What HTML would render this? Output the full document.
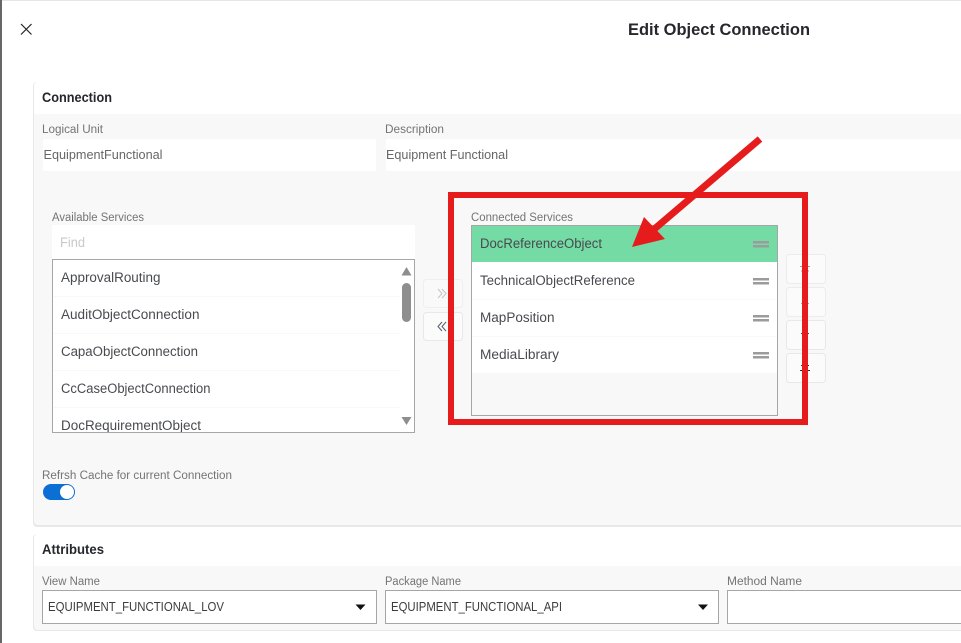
<!DOCTYPE html>
<html lang="en">
<head>
<meta charset="utf-8">
<title>Edit Object Connection</title>
<style>
html,body{margin:0;padding:0;width:961px;height:643px;overflow:hidden;background:#fff}
svg{display:block}
text{font-family:"Liberation Sans",Arial,sans-serif;white-space:pre}
.h{font-size:13.5px;font-weight:700;fill:#25272c}
.l{font-size:11.5px;fill:#747474}
.v{font-size:13px;fill:#666}
.i{font-size:13.5px;fill:#484a4f}
.s{font-size:12.5px;fill:#3c3c3c}
</style>
</head>
<body>
<svg width="961" height="643" viewBox="0 0 961 643" xmlns="http://www.w3.org/2000/svg">
<rect width="961" height="643" fill="#fff"/>
<rect x="0" y="0" width="961" height="1" fill="#e6e6e6"/>
<rect x="0" y="0" width="2" height="643" fill="#666"/>

<!-- close -->
<path d="M21 24 L31.5 34.5 M31.5 24 L21 34.5" stroke="#222" stroke-width="1.2" fill="none"/>
<text x="628" y="35" font-size="16.5" font-weight="700" fill="#25272c" textLength="182" lengthAdjust="spacingAndGlyphs">Edit Object Connection</text>

<!-- Connection card -->
<rect x="33" y="82" width="940" height="445" rx="4" fill="#e8e8e8"/>
<rect x="34" y="82" width="940" height="443" rx="4" fill="#f8f8f8"/>
<path d="M34 114 V86 a4 4 0 0 1 4-4 H961 V114 Z" fill="#fff"/>
<text class="h" x="42" y="102" textLength="70" lengthAdjust="spacingAndGlyphs">Connection</text>

<text class="l" x="42" y="133" textLength="61" lengthAdjust="spacingAndGlyphs">Logical Unit</text>
<rect x="43" y="139" width="333" height="32" rx="2" fill="#fff"/>
<text class="v" x="43.5" y="159" textLength="119" lengthAdjust="spacingAndGlyphs">EquipmentFunctional</text>
<text class="l" x="385" y="133" textLength="59" lengthAdjust="spacingAndGlyphs">Description</text>
<rect x="386" y="139" width="575" height="32" rx="2" fill="#fff"/>
<text class="v" x="386" y="159" textLength="122" lengthAdjust="spacingAndGlyphs">Equipment Functional</text>

<!-- Available services -->
<text class="l" x="52" y="221" textLength="92" lengthAdjust="spacingAndGlyphs">Available Services</text>
<rect x="52" y="225" width="363" height="34" fill="#fff"/>
<text x="60" y="247" font-size="13.5" fill="#c9c9c9" textLength="25" lengthAdjust="spacingAndGlyphs">Find</text>
<rect x="52.5" y="259.5" width="362" height="173" fill="#fff"/>
<path d="M54 296.5H400M54 333.5H400M54 370.5H400M54 407.5H400" stroke="#f8f8f8" stroke-width="1"/>
<text class="i" x="61" y="282" textLength="99.5" lengthAdjust="spacingAndGlyphs">ApprovalRouting</text>
<text class="i" x="61" y="319" textLength="138.5" lengthAdjust="spacingAndGlyphs">AuditObjectConnection</text>
<text class="i" x="61" y="356" textLength="137" lengthAdjust="spacingAndGlyphs">CapaObjectConnection</text>
<text class="i" x="61" y="393" textLength="149.5" lengthAdjust="spacingAndGlyphs">CcCaseObjectConnection</text>
<text class="i" x="61" y="430" textLength="140" lengthAdjust="spacingAndGlyphs">DocRequirementObject</text>
<rect x="53" y="432" width="362" height="6" fill="#f8f8f8"/>
<rect x="52.5" y="259.5" width="362" height="173" fill="none" stroke="#a6a6a6" stroke-width="1"/>
<path d="M406.5 267 L411.5 275.5 H401.5 Z" fill="#8e8e8e"/>
<rect x="402" y="283" width="9" height="39" rx="4.5" fill="#8e8e8e"/>
<path d="M401.5 417 H411.5 L406.5 425 Z" fill="#8e8e8e"/>

<!-- Move buttons -->
<rect x="423.5" y="279.5" width="39" height="28" rx="3" fill="#f9f9f9" stroke="#efefef"/>
<rect x="423.5" y="312.5" width="39" height="28" rx="3" fill="#fbfbfb" stroke="#e8e8e8"/>
<path d="M438 289 L442 293.500 L438 298 M442 289 L446 293.500 L442 298" stroke="#c4c4c4" stroke-width="1" fill="none"/>
<path d="M442 322 L438 326.500 L442 331 M446 322 L442 326.500 L446 331" stroke="#555b66" stroke-width="1" fill="none"/>

<!-- Order buttons -->
<rect x="786.500" y="254.500" width="39" height="29" rx="3" fill="#fbfbfb" stroke="#ececec"/>
<rect x="786.500" y="287.500" width="39" height="29" rx="3" fill="#fbfbfb" stroke="#ececec"/>
<rect x="786.500" y="320.500" width="39" height="29" rx="3" fill="#fbfbfb" stroke="#e8e8e8"/>
<rect x="786.500" y="353.500" width="39" height="29" rx="3" fill="#fbfbfb" stroke="#e8e8e8"/>
<path d="M800 266.500H810M801 271H809" stroke="#a99" stroke-width="1"/>
<path d="M801 303.500H809" stroke="#a99" stroke-width="1"/>
<path d="M801 333.500H809" stroke="#733" stroke-width="1"/>
<path d="M801 365.500H809M800 370.500H810" stroke="#422" stroke-width="1"/>

<!-- Connected services -->
<text class="l" x="471" y="221" textLength="102" lengthAdjust="spacingAndGlyphs">Connected Services</text>
<rect x="471.500" y="225.500" width="306" height="190" fill="#f8f8f8" stroke="#a6a6a6"/>
<rect x="472" y="226" width="305" height="36" fill="#74dba5"/>
<rect x="472" y="262" width="305" height="111" fill="#fff"/>
<path d="M472 299.500H777M472 336.500H777" stroke="#f8f8f8"/>
<text class="i" x="480" y="248" textLength="122" lengthAdjust="spacingAndGlyphs">DocReferenceObject</text>
<text class="i" x="480" y="285" textLength="155" lengthAdjust="spacingAndGlyphs">TechnicalObjectReference</text>
<text class="i" x="480" y="322" textLength="74.500" lengthAdjust="spacingAndGlyphs">MapPosition</text>
<text class="i" x="480" y="359" textLength="79" lengthAdjust="spacingAndGlyphs">MediaLibrary</text>
<g fill="#9b9b9b">
<rect x="753" y="241" width="16" height="2.500"/><rect x="753" y="245" width="16" height="2.500"/>
<rect x="753" y="278" width="16" height="2.500"/><rect x="753" y="282" width="16" height="2.500"/>
<rect x="753" y="315" width="16" height="2.500"/><rect x="753" y="319" width="16" height="2.500"/>
<rect x="753" y="352" width="16" height="2.500"/><rect x="753" y="356" width="16" height="2.500"/>
</g>

<!-- Toggle -->
<text class="l" x="42" y="479" textLength="190" lengthAdjust="spacingAndGlyphs">Refrsh Cache for current Connection</text>
<rect x="43" y="484" width="32" height="16" rx="8" fill="#0b6fd6"/>
<circle cx="67" cy="492" r="7" fill="#fff"/>

<!-- Attributes card -->
<rect x="33" y="534" width="940" height="97" rx="4" fill="#e8e8e8"/>
<rect x="34" y="534" width="940" height="96" rx="4" fill="#f8f8f8"/>
<path d="M34 566 V538 a4 4 0 0 1 4-4 H961 V566 Z" fill="#fff"/>
<text class="h" x="42" y="554" textLength="62" lengthAdjust="spacingAndGlyphs">Attributes</text>
<text class="l" x="42" y="585" textLength="58" lengthAdjust="spacingAndGlyphs">View Name</text>
<text class="l" x="385" y="585" textLength="76" lengthAdjust="spacingAndGlyphs">Package Name</text>
<text class="l" x="727" y="585" textLength="75" lengthAdjust="spacingAndGlyphs">Method Name</text>
<rect x="42.500" y="590.500" width="334" height="33" fill="#fff" stroke="#a6a6a6"/>
<rect x="385.500" y="590.500" width="333" height="33" fill="#fff" stroke="#a6a6a6"/>
<rect x="727.500" y="590.500" width="240" height="33" fill="#fff" stroke="#a6a6a6"/>
<text class="s" x="48" y="611" textLength="176" lengthAdjust="spacingAndGlyphs">EQUIPMENT_FUNCTIONAL_LOV</text>
<text class="s" x="391" y="611" textLength="171" lengthAdjust="spacingAndGlyphs">EQUIPMENT_FUNCTIONAL_API</text>
<path d="M355.500 604.500 H365.500 L360.500 610 Z" fill="#111"/>
<path d="M698 604.500 H708 L703 610 Z" fill="#111"/>

<!-- Annotation -->
<rect x="451" y="195" width="354" height="227" fill="none" stroke="#e61c1c" stroke-width="6"/>
<path d="M760 139 L652 231" stroke="#e61c1c" stroke-width="7" fill="none"/>
<path d="M632 247 L644 217 L665 239 Z" fill="#e61c1c"/>
</svg>
</body>
</html>
